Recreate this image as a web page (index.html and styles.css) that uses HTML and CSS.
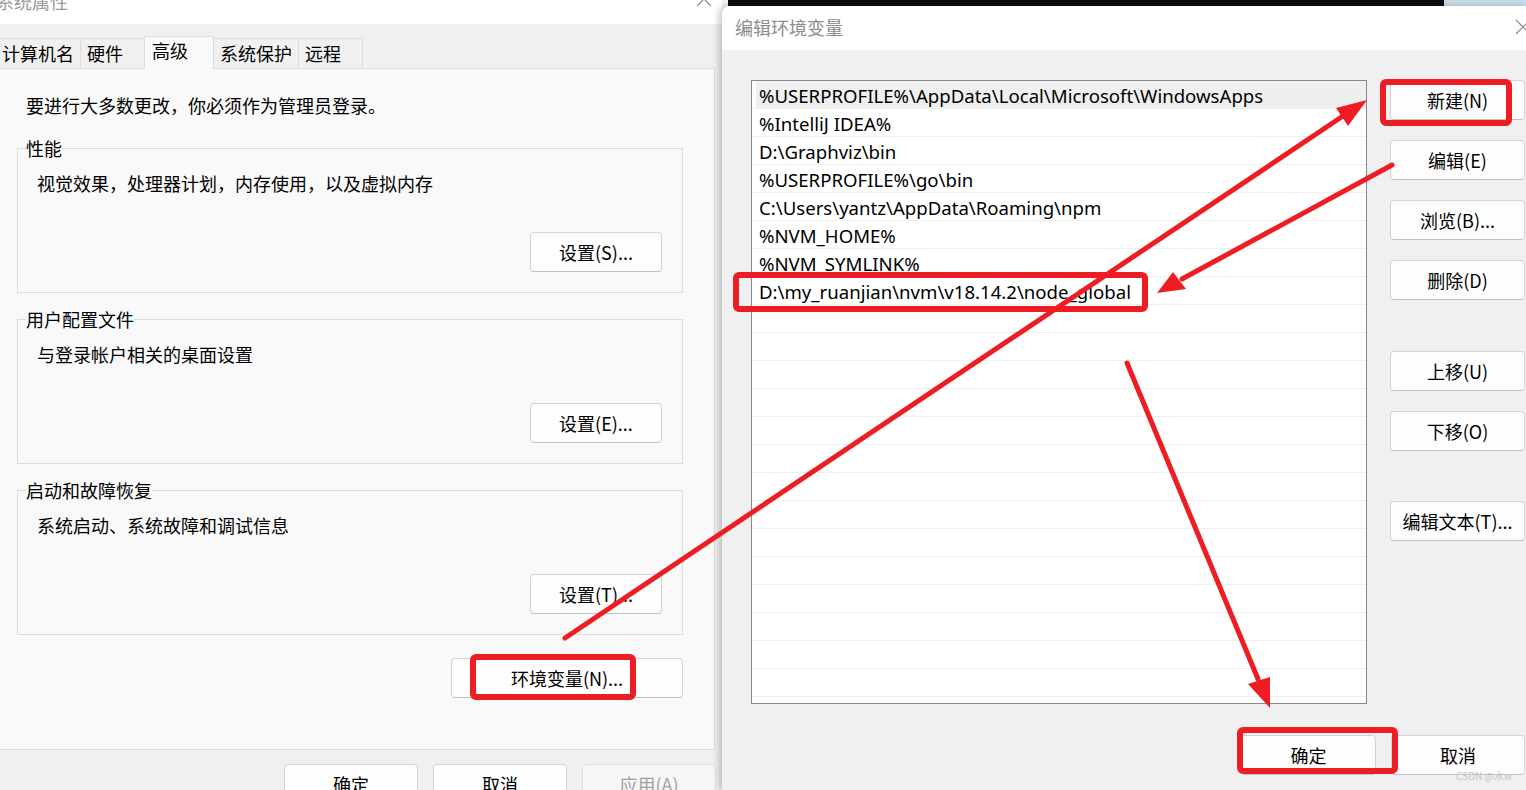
FILE: index.html
```html
<!DOCTYPE html>
<html lang="zh-CN">
<head>
<meta charset="utf-8">
<title>编辑环境变量</title>
<link rel="stylesheet" href="styles.css">
</head>
<body>
<div class="desktop">
  <section class="sysprops">
    <header class="sp-title">
      <span class="sp-title-text">系统属性</span>
      <svg class="sp-close" width="18" height="18" viewBox="0 0 18 18"><path d="M2 2L16 16M16 2L2 16" stroke="#8a8a8a" stroke-width="1.2" fill="none"/></svg>
    </header>
    <nav class="tabs">
      <div class="tab">计算机名</div>
      <div class="tab">硬件</div>
      <div class="tab active">高级</div>
      <div class="tab">系统保护</div>
      <div class="tab">远程</div>
    </nav>
    <div class="panel">
      <p class="note">要进行大多数更改，你必须作为管理员登录。</p>
      <fieldset class="group first">
        <legend>性能</legend>
        <p class="desc">视觉效果，处理器计划，内存使用，以及虚拟内存</p>
        <div class="btnrow"><button class="btn">设置(S)...</button></div>
      </fieldset>
      <fieldset class="group">
        <legend>用户配置文件</legend>
        <p class="desc">与登录帐户相关的桌面设置</p>
        <div class="btnrow"><button class="btn">设置(E)...</button></div>
      </fieldset>
      <fieldset class="group">
        <legend>启动和故障恢复</legend>
        <p class="desc">系统启动、系统故障和调试信息</p>
        <div class="btnrow"><button class="btn">设置(T)...</button></div>
      </fieldset>
      <div class="env-row"><button class="btn btn-env">环境变量(N)...</button></div>
    </div>
    <footer class="sp-foot">
      <button class="btn btn-foot">确定</button>
      <button class="btn btn-foot">取消</button>
      <button class="btn btn-foot disabled">应用(A)</button>
    </footer>
  </section>

  <div class="right-col">
    <section class="dlg">
      <header class="dlg-title">
        <span class="dlg-title-text">编辑环境变量</span>
        <svg class="dlg-close" width="16" height="16" viewBox="0 0 16 16"><path d="M1 1L15 15M15 1L1 15" stroke="#8a8a8a" stroke-width="1.2" fill="none"/></svg>
      </header>
      <div class="dlg-body">
        <div class="dlg-main">
          <div class="list">
            <div class="row sel">%USERPROFILE%\AppData\Local\Microsoft\WindowsApps</div>
            <div class="row">%IntelliJ IDEA%</div>
            <div class="row">D:\Graphviz\bin</div>
            <div class="row">%USERPROFILE%\go\bin</div>
            <div class="row">C:\Users\yantz\AppData\Roaming\npm</div>
            <div class="row">%NVM_HOME%</div>
            <div class="row">%NVM_SYMLINK%</div>
            <div class="row">D:\my_ruanjian\nvm\v18.14.2\node_global</div>
            <div class="row"></div><div class="row"></div><div class="row"></div><div class="row"></div>
            <div class="row"></div><div class="row"></div><div class="row"></div><div class="row"></div>
            <div class="row"></div><div class="row"></div><div class="row"></div><div class="row"></div>
            <div class="row"></div><div class="row"></div>
          </div>
          <div class="side">
            <button class="btn btn-side">新建(N)</button>
            <button class="btn btn-side">编辑(E)</button>
            <button class="btn btn-side">浏览(B)...</button>
            <button class="btn btn-side">删除(D)</button>
            <button class="btn btn-side push">上移(U)</button>
            <button class="btn btn-side">下移(O)</button>
            <button class="btn btn-side push2">编辑文本(T)...</button>
          </div>
        </div>
        <div class="dlg-foot">
          <button class="btn btn-ok">确定</button>
          <button class="btn btn-cancel">取消</button>
        </div>
      </div>
    </section>
  </div>

  <div class="watermark">CSDN @水w</div>

  <svg class="annot" width="1526" height="790" viewBox="0 0 1526 790">
    <g fill="none" stroke="#ee1d24" stroke-width="6">
      <rect x="1383" y="82" width="126" height="41" rx="3"/>
      <rect x="736" y="275" width="409" height="34" rx="3"/>
      <rect x="473" y="657" width="160" height="40" rx="3"/>
      <rect x="1240" y="730" width="155" height="41" rx="3"/>
    </g>
    <g stroke="#ee1d24" stroke-width="5" stroke-linecap="round">
      <line x1="565" y1="638" x2="1343" y2="116"/>
      <line x1="1392" y1="165" x2="1182" y2="279"/>
      <line x1="1127" y1="363" x2="1258" y2="679"/>
    </g>
    <g fill="#ee1d24">
      <polygon points="1367,100 1348,126 1336,108"/>
      <polygon points="1157,293 1173,272 1186,289"/>
      <polygon points="1270,708 1270,677 1248,684"/>
    </g>
  </svg>
</div>
</body>
</html>
```

FILE: styles.css
```css
* {
  box-sizing: border-box;
}

html,
body {
  margin: 0;
  padding: 0;
}

body {
  width: 1526px;
  height: 790px;
  overflow: hidden;
  font-family: "Noto Sans CJK SC", "Noto Sans", sans-serif;
  font-size: 18px;
  color: #000;
  background: #0b0b0b;
}

.desktop {
  position: relative;
  display: flex;
  width: 1526px;
  height: 790px;
  overflow: hidden;
}

/* ---------- 系统属性 window ---------- */
.sysprops {
  width: 722px;
  flex: none;
  height: 790px;
  background: #f0f0f0;
  display: flex;
  flex-direction: column;
}

.sp-title {
  height: 24px;
  flex: none;
  background: #fff;
  display: flex;
  justify-content: space-between;
  overflow: hidden;
}

.sp-title-text {
  font-size: 18px;
  line-height: 18px;
  color: #9a9a9a;
  margin: -8px 0 0 -4px;
}

.sp-close {
  margin: -10px 9px 0 0;
}

.tabs {
  height: 44px;
  flex: none;
  display: flex;
  align-items: flex-end;
  margin-left: -5px;
}

.tab {
  height: 30px;
  min-width: 65px;
  padding: 0 6px;
  border: 1px solid #dcdcdc;
  border-bottom: none;
  background: #f0f0f0;
  line-height: 29px;
  margin-right: -1px;
  white-space: nowrap;
}

.tab.active {
  height: 33px;
  min-width: 70px;
  padding: 0 7px;
  background: #f9f9f9;
  margin-bottom: -1px;
  line-height: 27px;
  position: relative;
  z-index: 1;
}

.panel {
  height: 682px;
  flex: none;
  width: 716px;
  margin-left: -1px;
  background: #f9f9f9;
  border: 1px solid #dcdcdc;
}

.note {
  margin: 24px 0 0 26px;
  line-height: 24px;
}

.group {
  margin: 14px 0 0 17px;
  width: 666px;
  padding: 0 20px 20px 0;
  border: 1px solid #dcdcdc;
  min-width: 0;
}

.group.first {
  margin-top: 19px;
}

.group legend {
  margin-left: 8px;
  padding: 0;
  line-height: 24px;
}

.desc {
  margin: 11px 0 0;
  padding-left: 19px;
  line-height: 24px;
}

.btnrow {
  display: flex;
  justify-content: flex-end;
  margin-top: 37px;
}

.env-row {
  margin: 23px 0 0 17px;
  width: 666px;
  display: flex;
  justify-content: flex-end;
}

.btn {
  height: 40px;
  width: 132px;
  padding: 0;
  border: 1px solid #d3d3d3;
  border-bottom-color: #c2c2c2;
  border-radius: 4px;
  background: #fdfdfd;
  font-family: inherit;
  font-size: 18px;
  color: #000;
  display: flex;
  align-items: center;
  justify-content: center;
  white-space: nowrap;
}

.btn-env {
  width: 232px;
}

.sp-foot {
  flex: 1;
  display: flex;
  justify-content: flex-end;
  gap: 15px;
  padding: 14px 6px 0 0;
}

.btn-foot {
  width: 134px;
}

.btn-foot.disabled {
  color: #a0a0a0;
  background: #f6f6f6;
  border-color: #e3e3e3;
}

/* ---------- 编辑环境变量 dialog ---------- */
.right-col {
  flex: 1;
  padding-top: 6px;
  background: linear-gradient(to right, #f2f2f2 0 6px, #0b0b0b 6px calc(100% - 82px), #c9dbe8 calc(100% - 82px));
  position: relative;
  z-index: 2;
}

.dlg {
  height: 784px;
  background: #f0f0f0;
  border-top-left-radius: 8px;
  box-shadow: -3px 0 7px rgba(0, 0, 0, 0.22);
  overflow: hidden;
}

.dlg-title {
  height: 44px;
  background: #fff;
  display: flex;
  align-items: center;
  justify-content: space-between;
  padding: 0 0 3px 13px;
}

.dlg-title-text {
  color: #8c8c8c;
  font-size: 18px;
  line-height: 24px;
}

.dlg-close {
  margin-right: -5px;
}

.dlg-body {
  padding: 30px 0 0 29px;
}

.dlg-main {
  display: flex;
  gap: 23px;
}

.list {
  width: 616px;
  height: 624px;
  flex: none;
  border: 1px solid #848891;
  background: #fff;
  overflow: hidden;
}

.row {
  height: 28px;
  border-bottom: 1px solid #efefef;
  padding: 2px 0 0 7px;
  line-height: 25px;
  white-space: nowrap;
  font-family: "Noto Sans", "Noto Sans CJK SC", sans-serif;
  font-size: 18.6px;
}

.row.sel {
  background: linear-gradient(to right, #fff 0 4px, #efefef 4px);
}

.side {
  width: 135px;
  display: flex;
  flex-direction: column;
  gap: 20px;
}

.btn-side {
  width: 135px;
}

.btn-side.push {
  margin-top: 31px;
}

.btn-side.push2 {
  margin-top: 30px;
}

.dlg-foot {
  display: flex;
  justify-content: flex-end;
  gap: 15px;
  margin-top: 31px;
  padding-right: 1px;
}

.btn-ok {
  width: 135px;
}

.btn-cancel {
  width: 134px;
}

/* ---------- overlays ---------- */
.watermark {
  position: absolute;
  right: 14px;
  bottom: 8px;
  font-size: 10px;
  line-height: 12px;
  color: #c4c4c4;
  z-index: 5;
}

.annot {
  position: absolute;
  left: 0;
  top: 0;
  pointer-events: none;
  z-index: 10;
}
```
